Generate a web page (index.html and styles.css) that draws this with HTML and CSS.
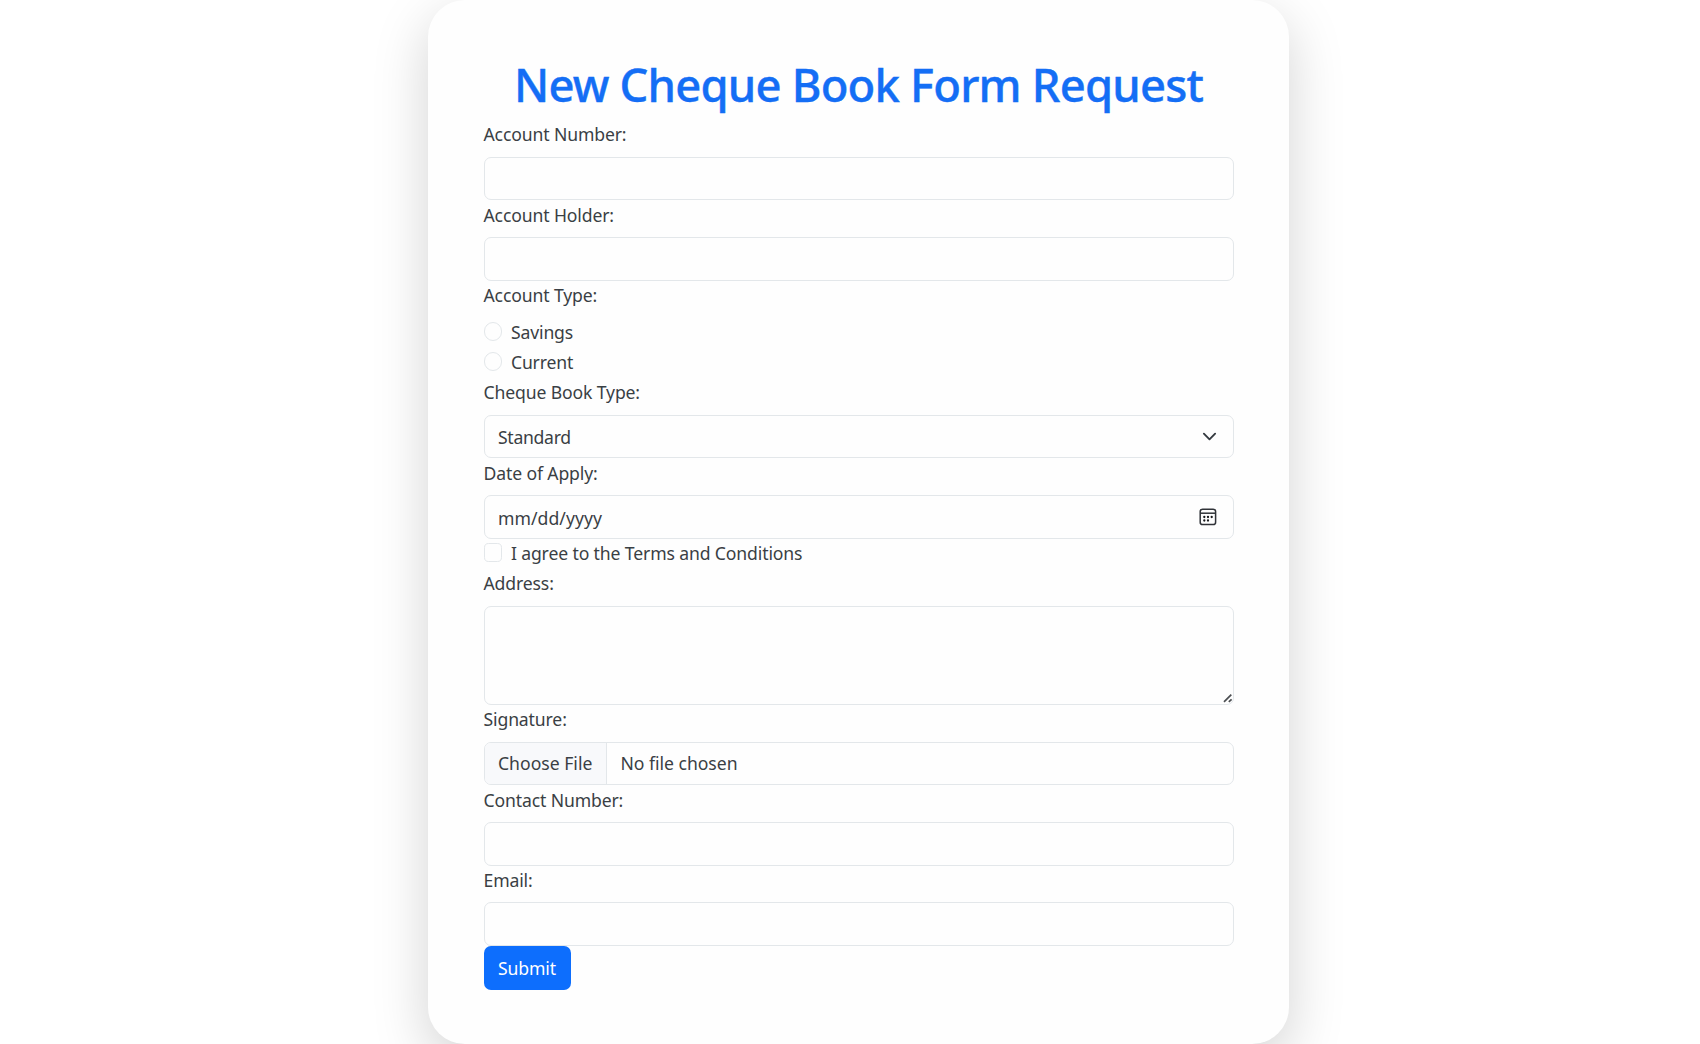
FILE: index.html
```
<!DOCTYPE html>
<html lang="en">
<head>
<meta charset="utf-8">
<title>New Cheque Book Form Request</title>
<link rel="stylesheet" href="styles.css">
</head>
<body>
<main class="card">
  <h1 class="title">New Cheque Book Form Request</h1>
  <form class="form">
    <label class="label" for="number">Account Number:</label>
    <input class="control" id="number" type="text">
    <label class="label" for="holder">Account Holder:</label>
    <input class="control" id="holder" type="text">
    <span class="label">Account Type:</span>
    <label class="check"><input class="check-input radio" type="radio" name="type"><span class="check-text">Savings</span></label>
    <label class="check"><input class="check-input radio" type="radio" name="type"><span class="check-text">Current</span></label>
    <span class="label">Cheque Book Type:</span>
    <div class="control" role="combobox" tabindex="0">
      <span class="value standard">Standard</span>
      <svg class="chevron" viewBox="0 0 16 16"><path d="m2 5 6 6 6-6" fill="none" stroke="#343a40" stroke-width="2" stroke-linecap="round" stroke-linejoin="round"/></svg>
    </div>
    <span class="label">Date of Apply:</span>
    <div class="control" tabindex="0">
      <span class="value date">mm/dd/yyyy</span>
      <svg class="calendar" viewBox="0 0 18 18"><g fill="none" stroke="#303338" stroke-width="1.5"><rect x="1.2" y="1.2" width="15.4" height="15.4" rx="2.4"/><path d="M1.2 5.2h15.4"/></g><g fill="#17191c"><circle cx="5.3" cy="9" r="1.15"/><circle cx="9" cy="9" r="1.15"/><circle cx="12.7" cy="9" r="1.15"/><circle cx="5.3" cy="12.5" r="1.15"/><circle cx="9" cy="12.5" r="1.15"/></g></svg>
    </div>
    <label class="check"><input class="check-input" type="checkbox"><span class="check-text">I agree to the Terms and Conditions</span></label>
    <label class="label" for="address">Address:</label>
    <div class="area-wrap">
      <textarea class="control area" id="address"></textarea>
      <svg class="grip" viewBox="0 0 10 10"><path d="M1 8.9 8.3 1.6M5.8 8.9 8.6 6.3" stroke="#4c4f52" stroke-width="1.7" fill="none"/></svg>
    </div>
    <span class="label">Signature:</span>
    <div class="control file" tabindex="0">
      <span class="file-button">Choose File</span>
      <span class="file-name">No file chosen</span>
    </div>
    <label class="label" for="contact">Contact Number:</label>
    <input class="control" id="contact" type="text">
    <label class="label" for="email">Email:</label>
    <input class="control" id="email" type="email">
    <button class="submit" type="button">Submit</button>
  </form>
</main>
</body>
</html>
```
FILE: styles.css
```
:root {
  font-size: 18.38px;
}

* {
  box-sizing: border-box;
}

body {
  margin: 0;
  background: #fff;
  color: #3a3f44;
  font: 400 17.6px/27.57px "Noto Sans", "Open Sans", sans-serif;
  letter-spacing: -0.13px;
  overflow: hidden;
}

.card {
  width: 861px;
  height: 1044px;
  margin-left: 428px;
  padding: 55.7px 55.5px 0;
  border-radius: 37px;
  background: #fefefe;
  box-shadow: 0 18px 55px rgba(0, 0, 0, 0.176);
}

.title {
  margin: 0 0 0.5rem;
  padding-top: 1px;
  height: 55.14px;
  color: #146ef5;
  font: 500 45.4px/55.14px "Noto Sans", "Open Sans", sans-serif;
  letter-spacing: -0.8px;
  -webkit-text-stroke: 0.4px #146ef5;
  text-align: center;
  white-space: nowrap;
}

.form {
  display: flex;
  flex-direction: column;
  align-items: stretch;
}

.label {
  display: block;
  height: 27.57px;
  padding-top: 1.3px;
  margin-bottom: 0.5rem;
}

.control {
  display: flex;
  align-items: center;
  justify-content: space-between;
  width: 100%;
  height: 43.6px;
  margin: 0;
  padding: 0 14px 0 13.5px;
  border: 1px solid #e3e7ea;
  border-radius: 7px;
  outline: 0;
  background: #fefefe;
  color: inherit;
  font: inherit;
}

.value {
  padding-top: 3px;
}

.standard {
  letter-spacing: -0.3px;
}

.date {
  letter-spacing: 0.05px;
}

.chevron {
  width: 15px;
  height: 15px;
  margin-right: 2px;
}

.calendar {
  width: 18px;
  height: 18px;
  margin-right: 2px;
}

.check {
  display: flex;
  gap: 9px;
  height: 27.57px;
  margin-bottom: 2.7px;
}

.check-text {
  padding-top: 1.5px;
}

.check-input {
  appearance: none;
  flex: none;
  width: 18.4px;
  height: 18.4px;
  margin: 4.8px 0 0;
  border: 1px solid #e3e7ea;
  border-radius: 4.6px;
  background: #fefefe;
}

.radio {
  border-radius: 50%;
}

.area-wrap {
  position: relative;
  height: 99.4px;
}

.area {
  display: block;
  height: 100%;
  resize: none;
}

.grip {
  position: absolute;
  right: 1px;
  bottom: 2px;
  width: 10px;
  height: 10px;
}

.file {
  justify-content: flex-start;
  padding: 0;
  overflow: hidden;
}

.file-button {
  display: flex;
  align-items: center;
  width: 122px;
  height: 100%;
  padding: 1px 0 0 13.5px;
  border-right: 1px solid #e3e7ea;
  background: #f8f9fb;
  letter-spacing: 0;
  white-space: nowrap;
}

.file-name {
  padding: 1px 0 0 14px;
  letter-spacing: -0.03px;
}

.submit {
  align-self: flex-start;
  width: 87px;
  height: 43.66px;
  padding: 1px 0 0;
  border: 0;
  border-radius: 7px;
  background: #0d6efd;
  color: #fff;
  font: inherit;
  letter-spacing: inherit;
}
```
